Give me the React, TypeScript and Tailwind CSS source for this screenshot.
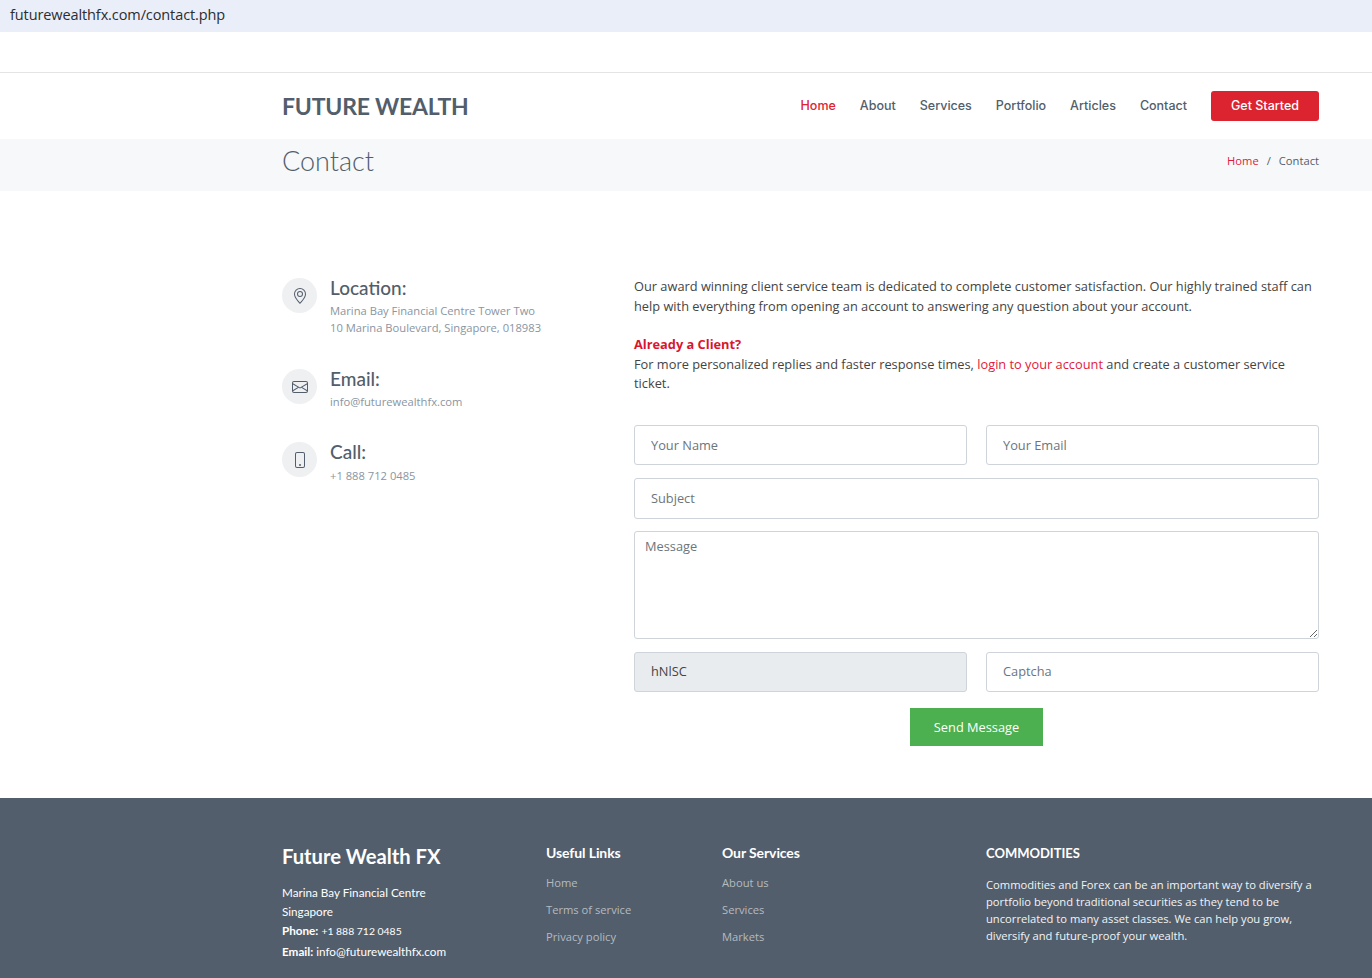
import { BsEnvelope, BsGeoAlt, BsPhone } from "react-icons/bs"

const nav = ["About", "Services", "Portfolio", "Articles", "Contact"]

const contacts = [
	{
		icon: <BsGeoAlt className="w-4 h-4" />,
		title: "Location:",
		lines: ["Marina Bay Financial Centre Tower Two", "10 Marina Boulevard, Singapore, 018983"],
		box: "h-[91px]",
		titleGap: "mb-[4px]",
	},
	{
		icon: <BsEnvelope className="w-4 h-4" />,
		title: "Email:",
		lines: ["info@futurewealthfx.com"],
		box: "h-[73px]",
		titleGap: "mb-[4px]",
	},
	{
		icon: <BsPhone className="w-4 h-4" />,
		title: "Call:",
		lines: ["+1 888 712 0485"],
		box: "h-[60px]",
		titleGap: "mb-[5px]",
	},
]

const usefulLinks = ["Home", "Terms of service", "Privacy policy"]
const serviceLinks = ["About us", "Services", "Markets"]

const inputClass =
	"w-full border border-[#ced4da] rounded-[3px] px-4 text-[12.8px] text-[#444] placeholder:text-[#6c757d] outline-none font-['Open_Sans',sans-serif]"

function FooterLinks({ title, items, className }: { title: string; items: string[]; className: string }) {
	return (
		<div className={className}>
			<h4 className="font-['Lato',sans-serif] font-bold text-[14px] leading-[17px] text-white tracking-[-0.1px] mb-[13px]">{title}</h4>
			<ul className="flex flex-col gap-[9px]">
				{items.map((item) => (
					<li key={item} className="text-[11.2px] leading-[18px] text-[#b5bac0]">
						{item}
					</li>
				))}
			</ul>
		</div>
	)
}

export default function App() {
	return (
		<div className="w-[1372px] h-[978px] overflow-hidden bg-white font-['Open_Sans',sans-serif] text-[#444]">
			<div className="h-8 bg-[#e9eef8] pl-[10px] pb-[2px] flex items-center text-[14.5px] text-[#2a2d31] tracking-[-0.1px]">
				futurewealthfx.com/contact.php
			</div>
			<div className="h-[41px] border-b border-[#e4e4e4]" />

			<header className="h-[66px] pl-[282px] pr-[53px] flex items-center justify-between">
				<div className="font-['Lato',sans-serif] font-bold text-[23px] text-[#525e6b] tracking-[-0.2px]">FUTURE WEALTH</div>
				<nav className="flex items-center gap-6 font-['Inter',sans-serif] font-medium text-[12.5px] text-[#525e6b]">
					<span className="text-[#df2330]">Home</span>
					{nav.map((item) => (
						<span key={item}>{item}</span>
					))}
					<span className="w-[108px] h-[30px] bg-[#dc2430] rounded-[3px] text-white flex items-center justify-center">Get Started</span>
				</nav>
			</header>

			<div className="h-[52px] bg-[#f6f8fa] pl-[282px] pr-[53px] pb-[8px] flex items-center justify-between">
				<h2 className="font-['Lato',sans-serif] font-light text-[27px] text-[#525e6b]">Contact</h2>
				<div className="flex items-center gap-2 text-[11.2px] text-[#525e6b]">
					<span className="text-[#e2183d]">Home</span>
					<span>/</span>
					<span>Contact</span>
				</div>
			</div>

			<main className="h-[607px] pl-[282px] pr-[53px] pt-[87px] flex">
				<div className="w-[352px] shrink-0">
					{contacts.map((c) => (
						<div key={c.title} className={`flex gap-[13px] ${c.box}`}>
							<div className="w-[35px] h-[35px] rounded-full bg-[#eef0f2] text-[#525e6b] flex items-center justify-center shrink-0">{c.icon}</div>
							<div className="-mt-[1px]">
								<h4 className={`font-['Lato',sans-serif] font-medium text-[19px] leading-[21px] text-[#525e6b] ${c.titleGap}`}>{c.title}</h4>
								{c.lines.map((line) => (
									<p key={line} className="text-[11.2px] leading-[17px] text-[#8a95a1]">
										{line}
									</p>
								))}
							</div>
						</div>
					))}
				</div>

				<div className="flex-1 -mt-[1px]">
					<p className="text-[12.8px] leading-[19.5px] text-[#444]">
						Our award winning client service team is dedicated to complete customer satisfaction. Our highly trained staff can help with everything from opening an account to answering any question about your account.
					</p>
					<div className="text-[12.8px] leading-[19px] mt-[18px] text-[#444]">
						<p className="font-bold text-[#d9152f] leading-[21px]">Already a Client?</p>
						<p>
							For more personalized replies and faster response times, <span className="text-[#e2183d]">login to your account</span> and create a customer service ticket.
						</p>
					</div>

					<form className="mt-[32px] flex flex-col gap-[13px]">
						<div className="grid grid-cols-2 gap-[19px]">
							<input className={`${inputClass} h-10 bg-white`} placeholder="Your Name" />
							<input className={`${inputClass} h-10 bg-white`} placeholder="Your Email" />
						</div>
						<input className={`${inputClass} h-[41px] pb-[2px] bg-white`} placeholder="Subject" />
						<textarea className="block -mt-[1px] w-full h-[108px] border border-[#ced4da] rounded-[3px] px-[10px] py-[5px] text-[12.8px] placeholder:text-[#6c757d] outline-none resize-y" placeholder="Message" />
						<div className="grid grid-cols-2 gap-[19px]">
							<input className={`${inputClass} h-10 pb-[2px] bg-[#e9ecef]`} value="hNlSC" readOnly />
							<input className={`${inputClass} h-10 pb-[2px] bg-white`} placeholder="Captcha" />
						</div>
						<button type="button" className="self-center mt-[3px] w-[133px] h-[38px] pt-[1px] bg-[#4caf50] text-white text-[12.8px]">
							Send Message
						</button>
					</form>
				</div>
			</main>

			<footer className="h-[180px] bg-[#525e6b] pl-[282px] pr-[53px] pt-[46px] flex text-white">
				<div className="w-[264px] shrink-0">
					<h3 className="font-['Lato',sans-serif] font-bold text-[20.2px] leading-[24px] mb-[15px]">Future Wealth FX</h3>
					<div className="font-['Lato',sans-serif] text-[11.7px] leading-[19.2px]">
						<p>Marina Bay Financial Centre</p>
						<p>Singapore</p>
						<p>
							<strong>Phone:</strong> <span className="text-[10.4px]">+1 888 712 0485</span>
						</p>
						<p>
							<strong>Email:</strong> info@futurewealthfx.com
						</p>
					</div>
				</div>
				<FooterLinks title="Useful Links" items={usefulLinks} className="w-[176px] shrink-0" />
				<FooterLinks title="Our Services" items={serviceLinks} className="w-[264px] shrink-0" />
				<div className="flex-1 pt-[1px]">
					<h4 className="font-['Lato',sans-serif] font-bold text-[13px] leading-[17px] mb-[14px]">COMMODITIES</h4>
					<p className="text-[11.2px] leading-[17px] text-[#f3f4f5]">
						Commodities and Forex can be an important way to diversify a portfolio beyond traditional securities as they tend to be uncorrelated to many asset classes. We can help you grow, diversify and future-proof your wealth.
					</p>
				</div>
			</footer>
		</div>
	)
}
